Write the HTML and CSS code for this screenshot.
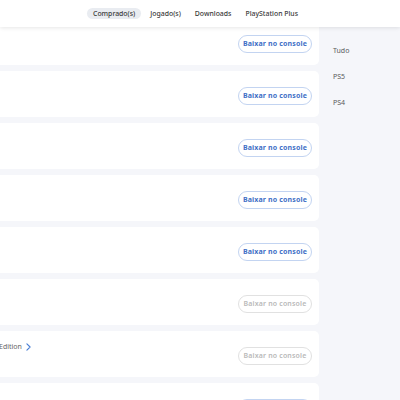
FILE: index.html
```html
<!DOCTYPE html>
<html lang="pt-BR">
<head>
<meta charset="utf-8">
<link rel="stylesheet" href="styles.css">
</head>
<body>
<header class="top">
  <nav class="tabs">
    <span class="tab active">Comprado(s)</span>
    <span class="tab">Jogado(s)</span>
    <span class="tab">Downloads</span>
    <span class="tab">PlayStation Plus</span>
  </nav>
</header>
<div class="page">
  <main class="list">
    <div class="card"><button class="dl">Baixar no console</button></div>
    <div class="card"><button class="dl">Baixar no console</button></div>
    <div class="card"><button class="dl">Baixar no console</button></div>
    <div class="card"><button class="dl">Baixar no console</button></div>
    <div class="card"><button class="dl">Baixar no console</button></div>
    <div class="card"><button class="dl off">Baixar no console</button></div>
    <div class="card"><span class="title">Edition <svg class="chev" viewBox="0 0 6 10" width="5" height="8"><path d="M1 1 L5 5 L1 9" fill="none" stroke="#4a7fd4" stroke-width="1.4" stroke-linecap="round" stroke-linejoin="round"/></svg></span><button class="dl off">Baixar no console</button></div>
    <div class="card"><button class="dl">Baixar no console</button></div>
  </main>
  <aside class="side">
    <span class="filter">Tudo</span>
    <span class="filter">PS5</span>
    <span class="filter">PS4</span>
  </aside>
</div>
</body>
</html>
```
FILE: styles.css
```css
* { box-sizing: border-box; }
html, body { margin: 0; padding: 0; }
body {
  width: 400px;
  height: 400px;
  overflow: hidden;
  background: #f5f6fa;
  font-family: "Noto Sans", "Liberation Sans", sans-serif;
}
.top {
  position: relative;
  z-index: 2;
  height: 27px;
  background: #fff;
  box-shadow: 0 1px 4px rgba(0,0,0,0.10);
  display: flex;
  align-items: center;
}
.tabs {
  display: flex;
  align-items: center;
  margin-left: 87px;
  gap: 4px;
}
.tab {
  font-size: 6.9px;
  font-weight: 500;
  color: #3a3a3a;
  padding: 0 5px;
  height: 11px;
  line-height: 11px;
  border-radius: 6px;
}
.tab.active { background: #e9ecf1; padding: 0 6px; }
.page {
  display: flex;
  margin-top: -8px;
}
.list {
  width: 329px;
  margin-left: -10px;
  display: flex;
  flex-direction: column;
  gap: 6px;
}
.card {
  height: 46px;
  background: #fff;
  border-radius: 5px;
  display: flex;
  align-items: center;
  justify-content: flex-end;
  padding-right: 7px;
  padding-top: 3px;
  position: relative;
}
.title {
  position: absolute;
  left: 9px;
  top: 11px;
  font-size: 7px;
  color: #666;
  display: flex;
  align-items: center;
  gap: 4px;
}
.dl {
  width: 74px;
  height: 18px;
  border: 1px solid #c3d4f1;
  border-radius: 9px;
  background: #fff;
  font-family: "Noto Sans", "Liberation Sans", sans-serif;
  font-size: 7px;
  font-weight: 700;
  letter-spacing: 0.15px;
  color: #3f6fc6;
  padding: 0;
}
.dl.off {
  color: #b9b9b9;
  border-color: #e1e1e1;
  font-weight: 600;
}
.side {
  flex: 1;
  display: flex;
  flex-direction: column;
  gap: 15px;
  padding-left: 14px;
  padding-top: 26px;
}
.filter {
  font-size: 7px;
  color: #5a5a5a;
  line-height: 11px;
}
```
